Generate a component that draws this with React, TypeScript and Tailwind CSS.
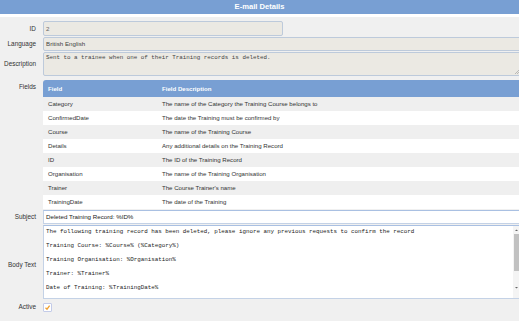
const fields = [
  { name: "Category", desc: "The name of the Category the Training Course belongs to" },
  { name: "ConfirmedDate", desc: "The date the Training must be confirmed by" },
  { name: "Course", desc: "The name of the Training Course" },
  { name: "Details", desc: "Any additional details on the Training Record" },
  { name: "ID", desc: "The ID of the Training Record" },
  { name: "Organisation", desc: "The name of the Training Organisation" },
  { name: "Trainer", desc: "The Course Trainer's name" },
  { name: "TrainingDate", desc: "The date of the Training" },
];

const bodyText = `The following training record has been deleted, please ignore any previous requests to confirm the record

Training Course: %Course% (%Category%)

Training Organisation: %Organisation%

Trainer: %Trainer%

Date of Training: %TrainingDate%`;

function Label({ text, top }: { text: string; top?: boolean }) {
  return (
    <div
      className={`w-[36px] shrink-0 text-right text-[6.4px] text-[#333] ${
        top ? "pt-[2px]" : "self-center"
      }`}
    >
      {text}
    </div>
  );
}

function Resize() {
  return (
    <svg width="5" height="5" viewBox="0 0 5 5" className="absolute right-[2px] bottom-[1px]">
      <path d="M5 1 L1 5 M5 3 L3 5" stroke="#999" strokeWidth="0.6" />
    </svg>
  );
}

export default function App() {
  return (
    <div className="w-[519px] h-[321px] overflow-hidden bg-[#f0f0f0] font-['Liberation_Sans',Arial,sans-serif]">
      {/* Title bar */}
      <div className="h-[14px] bg-[#789fd3] flex items-center justify-center text-white font-bold text-[7.6px]">
        E-mail Details
      </div>
      <div className="h-[3px] bg-white" />

      <div className="pt-[4px] flex flex-col gap-[1px] w-[522px]">
        {/* ID */}
        <div className="flex gap-[7px]">
          <Label text="ID" />
          <div className="w-[240px] h-[15px] bg-[#ebe9e3] border border-[#bdcadb] rounded-[2px] px-[2px] flex items-center text-[6.2px] text-[#666]">
            2
          </div>
        </div>

        {/* Language */}
        <div className="flex gap-[7px]">
          <Label text="Language" />
          <div className="flex-1 h-[14px] bg-[#ebe9e3] border border-[#bdcadb] rounded-[2px] px-[2px] flex items-center text-[6.2px] text-[#444]">
            British English
          </div>
        </div>

        {/* Description */}
        <div className="flex gap-[7px]">
          <Label text="Description" />
          <div className="relative flex-1 h-[24px] bg-[#ebe9e3] border border-[#bdcadb] rounded-[2px] px-[2px] pt-[1px] font-['Liberation_Mono',monospace] text-[5.85px] leading-[7px] text-[#444]">
            Sent to a trainee when one of their Training records is deleted.
            <Resize />
          </div>
        </div>

        {/* Fields table */}
        <div className="flex gap-[7px] mt-[3px]">
          <Label text="Fields" top />
          <div className="flex-1 text-[6.1px] text-[#333]">
            <div className="h-[17px] bg-[#789fd3] rounded-tl-[3px] flex items-center text-white font-bold">
              <div className="w-[119px] pl-[5px]">Field</div>
              <div>Field Description</div>
            </div>
            {fields.map((f, i) => (
              <div
                key={f.name}
                className={`h-[14px] flex items-center ${i % 2 === 0 ? "bg-[#efefef]" : "bg-white"}`}
              >
                <div className="w-[119px] pl-[5px]">{f.name}</div>
                <div>{f.desc}</div>
              </div>
            ))}
          </div>
        </div>

        {/* Subject */}
        <div className="flex gap-[7px]">
          <Label text="Subject" />
          <div className="flex-1 h-[14px] bg-white border border-[#c4d2e6] border-t-[#a9c0e2] px-[2px] flex items-center text-[6.2px] text-[#222]">
            Deleted Training Record: %ID%
          </div>
        </div>

        {/* Body text */}
        <div className="flex gap-[7px]">
          <div className="w-[36px] shrink-0 text-right text-[6.4px] text-[#333] pt-[35px]">Body Text</div>
          <div className="relative flex-1 h-[74px] bg-white border border-[#c4d2e6] border-t-[#a9c0e2] flex overflow-hidden">
            <pre className="flex-1 px-[2px] pt-[2px] font-['Liberation_Mono',monospace] text-[5.85px] leading-[7px] text-[#222] whitespace-pre">
              {bodyText}
            </pre>
            <div className="w-[8px] shrink-0 bg-[#f4f4f4] flex flex-col items-start pl-[1px]">
              <svg width="5" height="8" viewBox="0 0 5 8">
                <path d="M1 5 L2.5 3.5 L4 5 Z" fill="#666" />
              </svg>
              <div className="w-[5px] h-[37px] bg-[#c1c1c1]" />
              <div className="flex-1" />
              <svg width="5" height="8" viewBox="0 0 5 8">
                <path d="M1 3 L2.5 4.5 L4 3 Z" fill="#666" />
              </svg>
              <div className="h-[6px]" />
            </div>
          </div>
        </div>

        {/* Active */}
        <div className="flex gap-[7px] h-[14px] items-center">
          <Label text="Active" />
          <div className="w-[9px] h-[9px] bg-white border border-[#c3cbe8] rounded-[1px] flex items-center justify-center">
            <svg width="7" height="7" viewBox="0 0 7 7">
              <path d="M1.5 3.8 L3 5.2 L5.6 1.6" stroke="#f0a030" strokeWidth="1.3" fill="none" />
            </svg>
          </div>
        </div>
      </div>
    </div>
  );
}
